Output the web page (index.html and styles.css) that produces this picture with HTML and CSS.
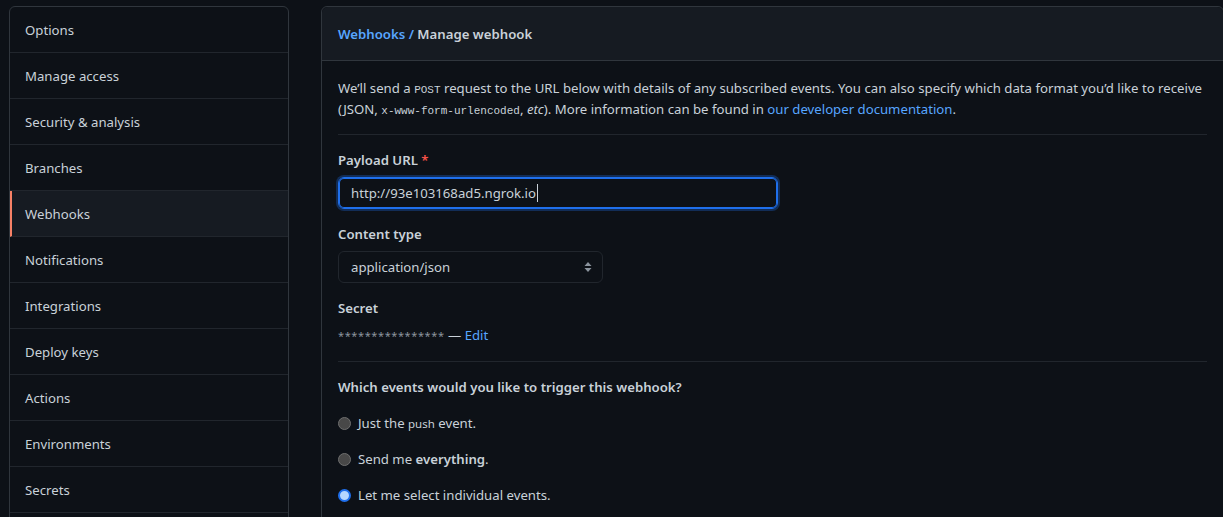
FILE: index.html
```html
<!DOCTYPE html>
<html>
<head>
<meta charset="utf-8">
<link rel="stylesheet" href="styles.css">
</head>
<body>
<div class="page">
  <nav class="menu">
    <a class="menu-item">Options</a>
    <a class="menu-item">Manage access</a>
    <a class="menu-item">Security &amp; analysis</a>
    <a class="menu-item">Branches</a>
    <a class="menu-item selected">Webhooks</a>
    <a class="menu-item">Notifications</a>
    <a class="menu-item">Integrations</a>
    <a class="menu-item">Deploy keys</a>
    <a class="menu-item">Actions</a>
    <a class="menu-item">Environments</a>
    <a class="menu-item">Secrets</a>
  </nav>
  <main class="box">
    <div class="box-header">
      <a class="crumb">Webhooks /</a> <span class="crumb-current">Manage webhook</span>
    </div>
    <div class="box-body">
      <p class="intro">We’ll send a <code>POST</code> request to the URL below with details of any subscribed events. You can also specify which data format you’d like to receive<br>(JSON, <code>x-www-form-urlencoded</code>, <em>etc</em>). More information can be found in <a class="link">our developer documentation</a>.</p>
      <hr class="sep">
      <div class="field">
        <label class="label">Payload URL <span class="req">*</span></label>
        <div class="input focused"><span>http://93e103168ad5.ngrok.io</span><span class="caret"></span></div>
      </div>
      <div class="field">
        <label class="label">Content type</label>
        <div class="select"><span>application/json</span>
          <svg class="arrows" width="8" height="12" viewBox="0 0 8 12"><path d="M4 1 L7.5 5 H0.5 Z" fill="#8b949e"/><path d="M4 11 L7.5 7 H0.5 Z" fill="#8b949e"/></svg>
        </div>
      </div>
      <div class="field">
        <label class="label">Secret</label>
        <div class="secret"><span class="stars">****************</span> — <a class="link">Edit</a></div>
      </div>
      <hr class="sep">
      <div class="question">Which events would you like to trigger this webhook?</div>
      <div class="radio-row"><span class="radio"></span><span>Just the <code class="small">push</code> event.</span></div>
      <div class="radio-row"><span class="radio"></span><span>Send me <strong>everything</strong>.</span></div>
      <div class="radio-row"><span class="radio checked"></span><span>Let me select individual events.</span></div>
    </div>
  </main>
</div>
</body>
</html>
```
FILE: styles.css
```css
html, body {
  margin: 0;
  padding: 0;
  background: #0d1117;
  overflow: hidden;
}
body {
  font-family: "Noto Sans", "Open Sans", sans-serif;
  font-size: 13.2px;
  line-height: 21px;
  color: #c9d1d9;
  width: 1223px;
  height: 517px;
}
.page {
  display: flex;
  gap: 32px;
  padding: 6px 0 0 9px;
  width: 1240px;
}
.menu {
  width: 278px;
  flex: none;
  border: 1px solid #30363d;
  border-radius: 6px;
  display: flex;
  flex-direction: column;
  height: 520px;
  overflow: hidden;
}
.menu-item {
  display: block;
  height: 44px;
  line-height: 44px;
  padding-top: 1px;
  padding-left: 15px;
  border-bottom: 1px solid #21262d;
  color: #c9d1d9;
  flex: none;
}
.menu-item.selected {
  background: #161b22;
  border-left: 2px solid #f78166;
  padding-left: 13px;
}
.box {
  width: 901px;
  flex: none;
  border: 1px solid #30363d;
  border-radius: 6px;
  height: 520px;
  overflow: hidden;
}
.box-header {
  background: #161b22;
  border-bottom: 1px solid #30363d;
  border-radius: 6px 6px 0 0;
  padding: 17px 16px 15px;
  font-weight: 600;
}
.crumb { color: #58a6ff; }
.crumb-current { color: #c9d1d9; }
.box-body {
  padding: 17px 16px 0;
}
.intro { margin: 0; }
code {
  font-family: "Liberation Mono", "DejaVu Sans Mono", monospace;
  font-size: 11px;
  line-height: 1;
}
em { font-style: italic; }
.link { color: #58a6ff; }
.sep {
  border: 0;
  border-top: 1px solid #21262d;
  margin: 14px 0 15px;
}
.field { margin-bottom: 15px; }
.label {
  display: block;
  font-weight: 600;
  margin-bottom: 6px;
}
.req { color: #f85149; }
.input {
  width: 414px;
  height: 30px;
  border: 1px solid #1f6feb;
  border-radius: 6px;
  box-shadow: inset 0 0 0 1px #1f6feb, 0 0 0 2px rgba(31,111,235,0.3);
  padding: 0 12px;
  display: flex;
  align-items: center;
  color: #c9d1d9;
}
.caret {
  display: inline-block;
  width: 1px;
  height: 18px;
  background: #c9d1d9;
  margin-left: 1px;
}
.select {
  width: 239px;
  height: 30px;
  border: 1px solid #21262d;
  border-radius: 6px;
  padding: 0 12px;
  display: flex;
  align-items: center;
  justify-content: space-between;
}
.arrows { margin-right: -2px; }
.secret { color: #c9d1d9; }
.stars { font-size: 11px; letter-spacing: 0.6px; color: #8b949e; }
.question {
  font-weight: 600;
  margin-bottom: 14px;
}
.radio-row {
  display: flex;
  align-items: center;
  gap: 7px;
  height: 22px;
  margin-bottom: 14px;
}
.radio {
  width: 11px;
  height: 11px;
  border-radius: 50%;
  background: #484848;
  border: 1px solid #6e6e6e;
  flex: none;
}
.radio.checked {
  background: #b6d7ff;
  border: 2px solid #1f6feb;
  width: 9px;
  height: 9px;
}
code.small { font-family: "Noto Sans", sans-serif; font-size: 11.5px; }
strong { font-weight: 600; }
```
